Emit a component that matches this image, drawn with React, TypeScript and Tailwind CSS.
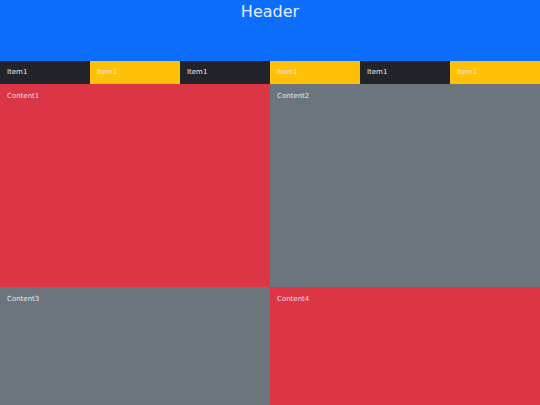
export default function App() {
  const items = [
    "bg-[#212529]",
    "bg-[#ffc107]",
    "bg-[#212529]",
    "bg-[#ffc107]",
    "bg-[#212529]",
    "bg-[#ffc107]",
  ];

  return (
    <div
      className="flex h-[405px] w-[540px] flex-col overflow-hidden"
      style={{ fontFamily: '"DejaVu Sans", sans-serif' }}
    >
      {/* HEADER */}
      <div className="h-[61px] bg-[#0d6efd] text-center text-base text-[#e8eefc]">
        Header
      </div>

      {/* NAV */}
      <div className="grid h-[23px] grid-cols-6">
        {items.map((bg, i) => (
          <div
            key={i}
            className={`flex items-center pl-[7px] text-[7px] text-[#e6e6e6] ${bg}`}
          >
            Item1
          </div>
        ))}
      </div>

      {/* CONTENT */}
      <div className="grid flex-1 grid-cols-2 grid-rows-[203px_1fr]">
        <div className="bg-[#dc3545] pl-[7px] pt-[7px] text-[7px] text-[#f5dde0]">
          Content1
        </div>
        <div className="bg-[#6c757d] pl-[7px] pt-[7px] text-[7px] text-[#e4e6e8]">
          Content2
        </div>
        <div className="bg-[#6c757d] pl-[7px] pt-[7px] text-[7px] text-[#e4e6e8]">
          Content3
        </div>
        <div className="bg-[#dc3545] pl-[7px] pt-[7px] text-[7px] text-[#f5dde0]">
          Content4
        </div>
      </div>
    </div>
  );
}
